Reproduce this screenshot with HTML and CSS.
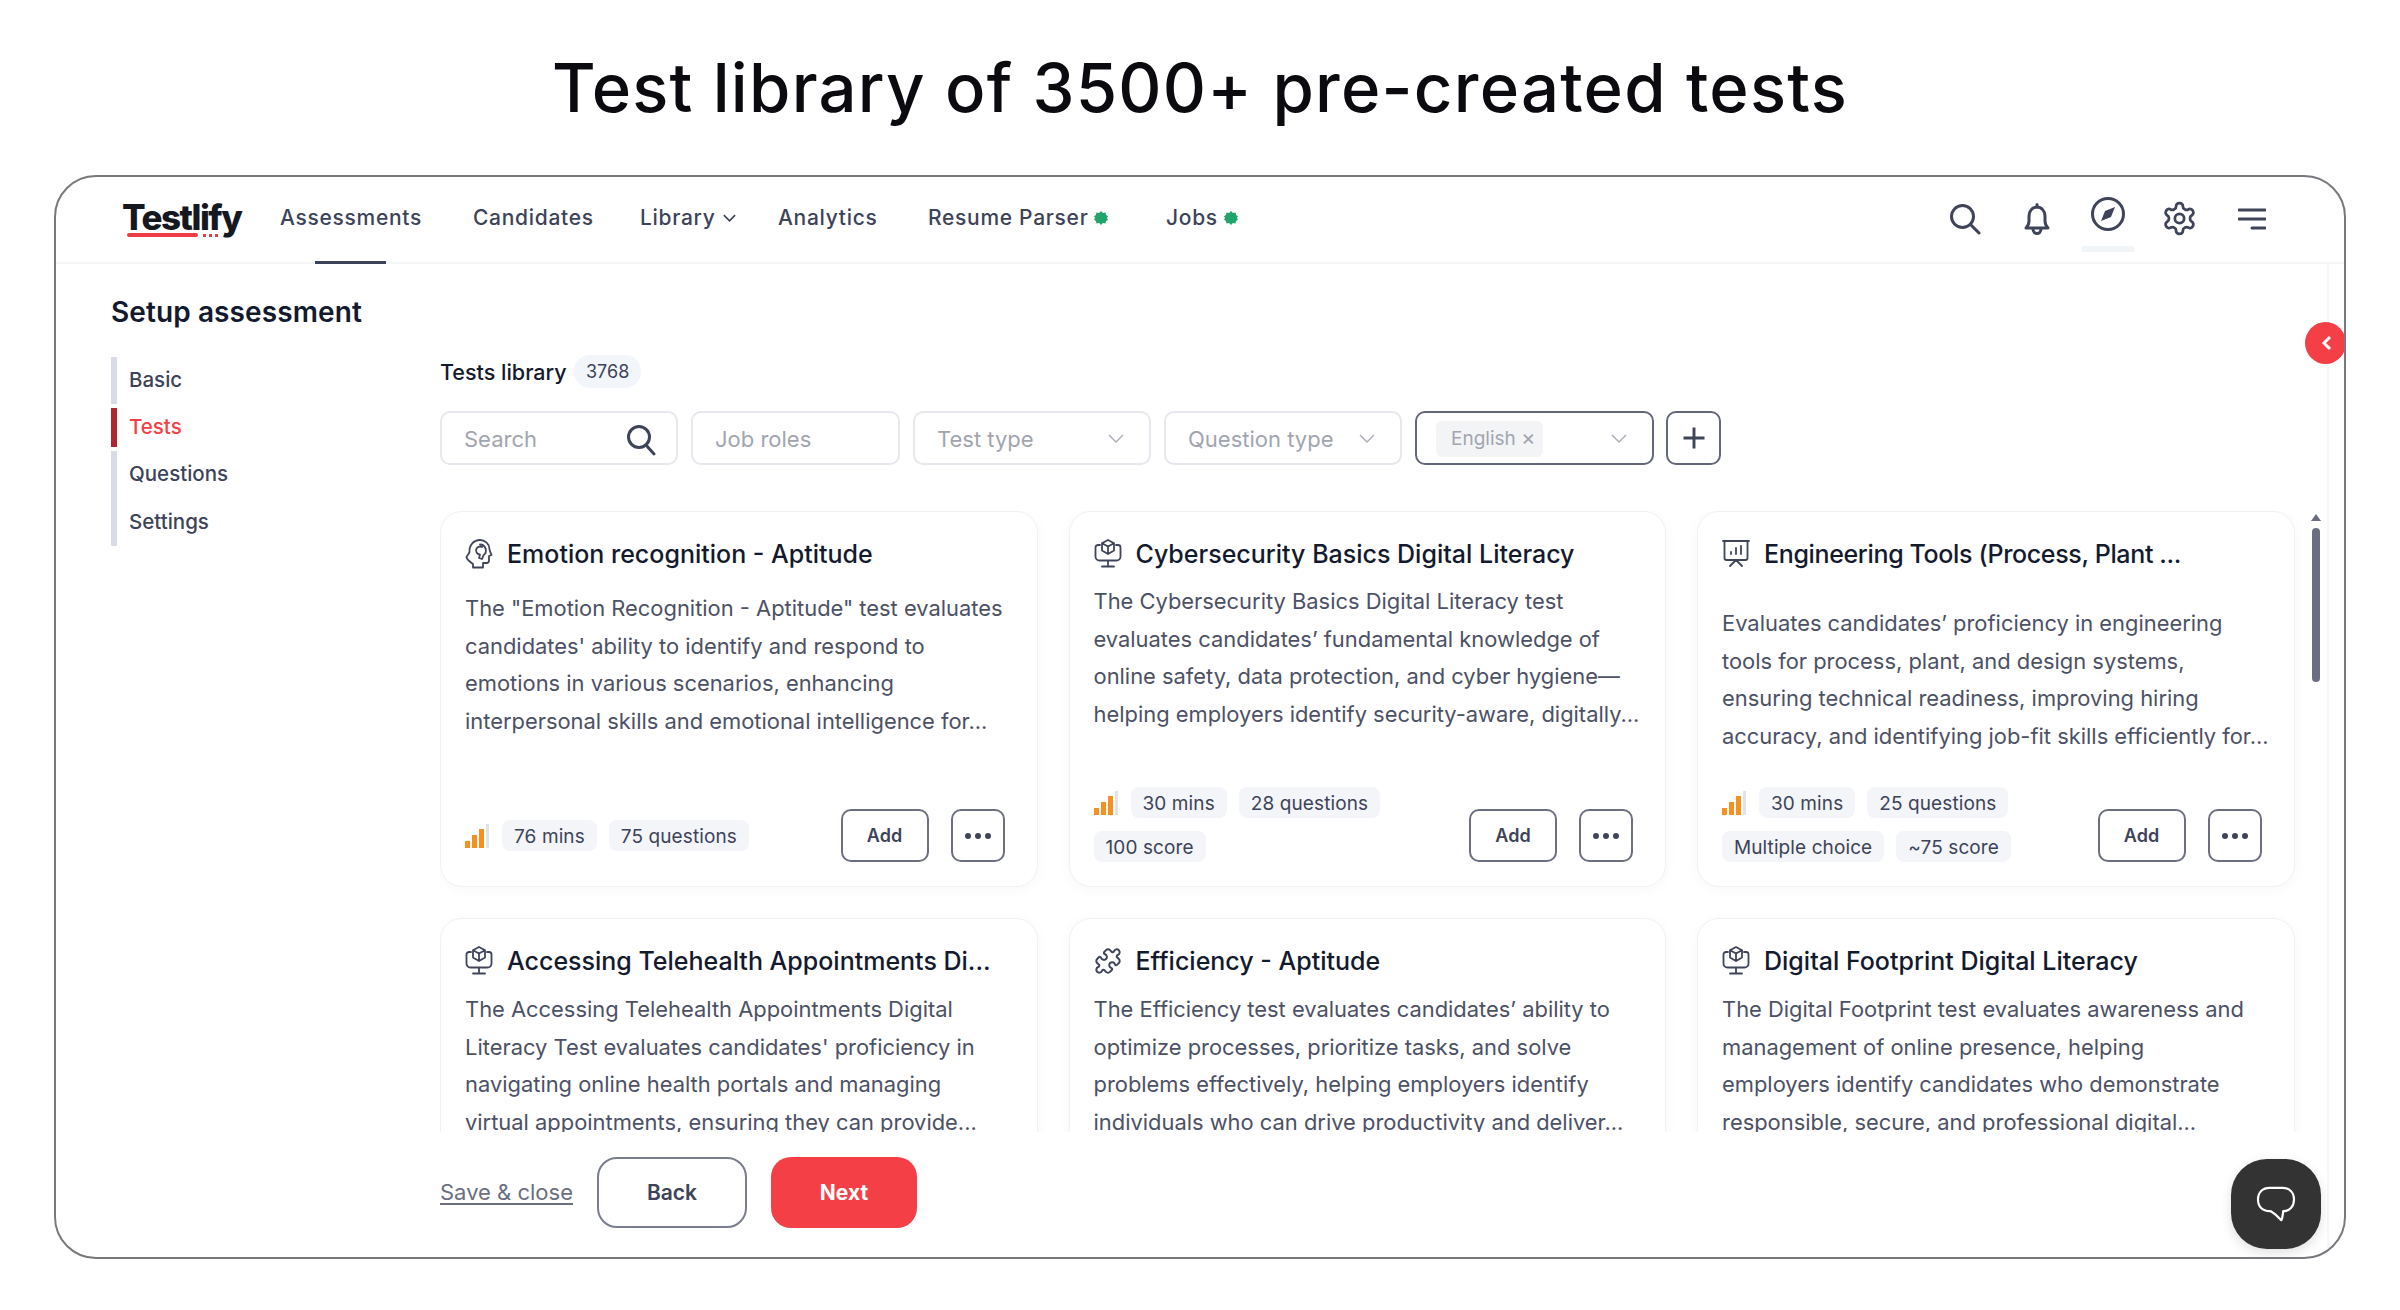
FILE: index.html
```html
<!DOCTYPE html>
<html lang="en">
<head>
<meta charset="utf-8">
<title>Test library</title>
<link rel="stylesheet" href="styles.css">
</head>
<body>
<h1 class="headline">Test library of 3500+ pre-created tests</h1>
<div class="frame">
  <header class="topbar">
    <div class="logo">Testlify<span class="logo-line"></span><span class="logo-dots"></span></div>
    <nav class="nav">
      <a class="nav-item nav-active">Assessments</a>
      <a class="nav-item">Candidates</a>
      <a class="nav-item">Library <svg class="chev" viewBox="0 0 16 10"><path d="M2 2l6 6 6-6"/></svg></a>
      <a class="nav-item">Analytics</a>
      <a class="nav-item">Resume Parser <svg class="dot" viewBox="0 0 14 14"><path d="M7 0l1.900 1.900L11.500 1.500l.6 2.400 1.900 1.300L13 7l1 1.800-1.900 1.300-.6 2.400-2.600-.4L7 14l-1.900-1.900-2.600.4-.6-2.400L0 8.800 1 7 0 5.200l1.900-1.300.6-2.400 2.600.4z"/></svg></a>
      <a class="nav-item">Jobs <svg class="dot" viewBox="0 0 14 14"><path d="M7 0l1.900 1.900L11.500 1.500l.6 2.400 1.900 1.300L13 7l1 1.800-1.900 1.300-.6 2.400-2.600-.4L7 14l-1.900-1.900-2.600.4-.6-2.400L0 8.800 1 7 0 5.200l1.900-1.300.6-2.400 2.600.4z"/></svg></a>
    </nav>
    <div class="tools">
      <svg class="tool tool-search" viewBox="0 0 32 32"><circle cx="13.500" cy="13.500" r="11"/><path d="M21.500 21.500L30 30"/></svg>
      <svg class="tool tool-bell" viewBox="0 0 28 32"><path d="M3 25c2-2 3-4 3-7v-5c0-5 3.500-9 8-9s8 4 8 9v5c0 3 1 5 3 7z"/><path d="M14 1.500V4M10 26c0 6 8 6 8 0"/></svg>
      <div class="tool-compass">
        <svg class="tool" viewBox="0 0 34 34"><circle cx="17" cy="17" r="15.500"/><path class="fill" d="M24 10l-4 10-10 4 4-10z"/></svg>
        <span class="compass-mark"></span>
      </div>
      <svg class="tool tool-gear" viewBox="0 0 24 24"><path d="M12.220 2h-.44a2 2 0 0 0-2 2v.18a2 2 0 0 1-1 1.730l-.43.25a2 2 0 0 1-2 0l-.15-.08a2 2 0 0 0-2.730.73l-.22.38a2 2 0 0 0 .73 2.730l.15.1a2 2 0 0 1 1 1.720v.51a2 2 0 0 1-1 1.740l-.15.09a2 2 0 0 0-.73 2.730l.22.38a2 2 0 0 0 2.730.73l.15-.08a2 2 0 0 1 2 0l.43.25a2 2 0 0 1 1 1.730V20a2 2 0 0 0 2 2h.44a2 2 0 0 0 2-2v-.18a2 2 0 0 1 1-1.730l.43-.25a2 2 0 0 1 2 0l.15.08a2 2 0 0 0 2.730-.73l.22-.39a2 2 0 0 0-.73-2.730l-.15-.08a2 2 0 0 1-1-1.740v-.5a2 2 0 0 1 1-1.740l.15-.09a2 2 0 0 0 .73-2.730l-.22-.38a2 2 0 0 0-2.730-.73l-.15.08a2 2 0 0 1-2 0l-.43-.25a2 2 0 0 1-1-1.730V4a2 2 0 0 0-2-2z"/><circle cx="12" cy="12" r="3"/></svg>
      <svg class="tool tool-menu" viewBox="0 0 28 22"><path d="M1 2h26M1 11h26M14 20h13"/></svg>
    </div>
  </header>

  <div class="body">
    <aside class="side">
      <h2 class="side-title">Setup assessment</h2>
      <ul class="steps">
        <li class="step step-basic">Basic</li>
        <li class="step step-tests">Tests</li>
        <li class="step step-rest">Questions</li>
        <li class="step step-rest">Settings</li>
      </ul>
    </aside>

    <main class="main">
      <div class="lib-head"><span class="lib-title">Tests library</span><span class="lib-count">3768</span></div>
      <div class="filters">
        <div class="field f-search"><span class="ph">Search</span><svg class="f-mag" viewBox="0 0 30 32"><circle cx="13" cy="13" r="10.500"/><path d="M20 21l8 9"/></svg></div>
        <div class="field f-job"><span class="ph">Job roles</span></div>
        <div class="field f-wide"><span class="ph">Test type</span><svg class="f-chev" viewBox="0 0 16 10"><path d="M1 1l7 7 7-7"/></svg></div>
        <div class="field f-wide"><span class="ph">Question type</span><svg class="f-chev" viewBox="0 0 16 10"><path d="M1 1l7 7 7-7"/></svg></div>
        <div class="field f-lang"><span class="chip">English <span class="chip-x">×</span></span><svg class="f-chev" viewBox="0 0 16 10"><path d="M1 1l7 7 7-7"/></svg></div>
        <div class="f-plus"><svg viewBox="0 0 24 24"><path d="M12 3v18M3 12h18"/></svg></div>
      </div>

      <div class="scroller">
        <div class="cards">
          <article class="card">
            <div class="card-head">
              <svg class="card-ico" viewBox="0 0 28 30"><path d="M8 28.500V25c-3-2-6-4-6.500-7 .5-1.500 2.500-3 3-5C4 6 9 1 15 1c5 0 9.500 4 9.500 9 0 2 1 3.500 2 6l-2.500 1v4.500c0 1.500-1 2.500-2.500 2.500H18v4.500z"/><path d="M15 5.500a6 6 0 0 1 3.500 10.800L17 20l-3-1 1-3.500a4 4 0 1 1 2-7.500"/></svg>
              <h3 class="card-title">Emotion recognition - Aptitude</h3>
            </div>
            <p class="desc d-20">The "Emotion Recognition - Aptitude" test evaluates<br>candidates' ability to identify and respond to<br>emotions in various scenarios, enhancing<br>interpersonal skills and emotional intelligence for...</p>
            <div class="card-foot foot-single">
              <div class="meta">
                <svg class="level" viewBox="0 0 24 24"><rect x="0" y="17" width="5" height="7" fill="#f7901e"/><rect x="7" y="11" width="5" height="13" fill="#f7901e"/><rect x="14" y="5" width="5" height="19" fill="#f7901e"/><rect x="21" y="0" width="3" height="24" fill="#dfe3ea"/></svg>
                <span class="tag">76 mins</span><span class="tag">75 questions</span>
              </div>
              <div class="actions"><button class="btn-add">Add</button><button class="btn-more"><i></i><i></i><i></i></button></div>
            </div>
          </article>

          <article class="card">
            <div class="card-head">
              <svg class="card-ico" viewBox="0 0 28 30"><path d="M6 6H4a2.500 2.500 0 0 0-2.500 2.500v9A4 4 0 0 0 5.500 21.500h17a4 4 0 0 0 4-4v-9A2.500 2.500 0 0 0 24 6h-2M14 21.500V27M8 27.500h12"/><path d="M14 1l6 3.200v7.300l-6 3.500-6-3.500V4.200zM8 4.200l6 3.300 6-3.300M14 7.500V15"/></svg>
              <h3 class="card-title">Cybersecurity Basics Digital Literacy</h3>
            </div>
            <p class="desc d-13">The Cybersecurity Basics Digital Literacy test<br>evaluates candidates’ fundamental knowledge of<br>online safety, data protection, and cyber hygiene—<br>helping employers identify security-aware, digitally...</p>
            <div class="card-foot">
              <div class="meta">
                <svg class="level" viewBox="0 0 24 24"><rect x="0" y="17" width="5" height="7" fill="#f7901e"/><rect x="7" y="11" width="5" height="13" fill="#f7901e"/><rect x="14" y="5" width="5" height="19" fill="#f7901e"/><rect x="21" y="0" width="3" height="24" fill="#dfe3ea"/></svg>
                <span class="tag">30 mins</span><span class="tag">28 questions</span><span class="tag">100 score</span>
              </div>
              <div class="actions"><button class="btn-add">Add</button><button class="btn-more"><i></i><i></i><i></i></button></div>
            </div>
          </article>

          <article class="card">
            <div class="card-head">
              <svg class="card-ico" viewBox="0 0 28 30"><path d="M1 2h26M2.500 2v17a2 2 0 0 0 2 2h19a2 2 0 0 0 2-2V2M14 21l-6 6M14 21l6 6M9 15v-2M14 15V9M19 15V7"/></svg>
              <h3 class="card-title title-tight">Engineering Tools (Process, Plant ...</h3>
            </div>
            <p class="desc d-35">Evaluates candidates’ proficiency in engineering<br>tools for process, plant, and design systems,<br>ensuring technical readiness, improving hiring<br>accuracy, and identifying job-fit skills efficiently for...</p>
            <div class="card-foot">
              <div class="meta">
                <svg class="level" viewBox="0 0 24 24"><rect x="0" y="17" width="5" height="7" fill="#f7901e"/><rect x="7" y="11" width="5" height="13" fill="#f7901e"/><rect x="14" y="5" width="5" height="19" fill="#f7901e"/><rect x="21" y="0" width="3" height="24" fill="#dfe3ea"/></svg>
                <span class="tag">30 mins</span><span class="tag">25 questions</span><span class="tag">Multiple choice</span><span class="tag">~75 score</span>
              </div>
              <div class="actions"><button class="btn-add">Add</button><button class="btn-more"><i></i><i></i><i></i></button></div>
            </div>
          </article>

          <article class="card">
            <div class="card-head">
              <svg class="card-ico" viewBox="0 0 28 30"><path d="M6 6H4a2.500 2.500 0 0 0-2.500 2.500v9A4 4 0 0 0 5.500 21.500h17a4 4 0 0 0 4-4v-9A2.500 2.500 0 0 0 24 6h-2M14 21.500V27M8 27.500h12"/><path d="M14 1l6 3.200v7.300l-6 3.500-6-3.500V4.200zM8 4.200l6 3.300 6-3.300M14 7.500V15"/></svg>
              <h3 class="card-title">Accessing Telehealth Appointments Di...</h3>
            </div>
            <p class="desc d-14">The Accessing Telehealth Appointments Digital<br>Literacy Test evaluates candidates' proficiency in<br>navigating online health portals and managing<br>virtual appointments, ensuring they can provide...</p>
          </article>

          <article class="card">
            <div class="card-head">
              <svg class="card-ico ico-puzzle" viewBox="0 0 24 24"><path d="M19.439 7.850c-.049.322.059.648.289.878l1.568 1.568c.47.47.706 1.087.706 1.704s-.235 1.233-.706 1.704l-1.611 1.611a.98.98 0 0 1-.837.276c-.47-.07-.802-.48-.968-.925a2.501 2.501 0 1 0-3.214 3.214c.446.166.855.497.925.968a.979.979 0 0 1-.276.837l-1.610 1.610a2.404 2.404 0 0 1-1.705.707 2.402 2.402 0 0 1-1.704-.706l-1.568-1.568a1.026 1.026 0 0 0-.877-.29c-.493.074-.84.504-1.020.968a2.500 2.500 0 1 1-3.237-3.237c.464-.18.894-.527.967-1.020a1.026 1.026 0 0 0-.289-.877l-1.568-1.568A2.402 2.402 0 0 1 1.998 12c0-.617.236-1.234.706-1.704L4.230 8.770c.24-.24.581-.353.917-.303.515.077.877.528 1.073 1.010a2.500 2.500 0 1 0 3.259-3.259c-.482-.196-.933-.558-1.010-1.073-.05-.336.062-.676.303-.917l1.525-1.525A2.402 2.402 0 0 1 12 1.998c.617 0 1.234.236 1.704.706l1.568 1.568c.23.23.556.338.877.29.493-.074.84-.504 1.020-.968a2.500 2.500 0 1 1 3.237 3.237c-.464.18-.894.527-.967 1.020z"/></svg>
              <h3 class="card-title">Efficiency - Aptitude</h3>
            </div>
            <p class="desc d-14">The Efficiency test evaluates candidates’ ability to<br>optimize processes, prioritize tasks, and solve<br>problems effectively, helping employers identify<br>individuals who can drive productivity and deliver...</p>
          </article>

          <article class="card">
            <div class="card-head">
              <svg class="card-ico" viewBox="0 0 28 30"><path d="M6 6H4a2.500 2.500 0 0 0-2.500 2.500v9A4 4 0 0 0 5.500 21.500h17a4 4 0 0 0 4-4v-9A2.500 2.500 0 0 0 24 6h-2M14 21.500V27M8 27.500h12"/><path d="M14 1l6 3.200v7.300l-6 3.500-6-3.500V4.200zM8 4.200l6 3.300 6-3.300M14 7.500V15"/></svg>
              <h3 class="card-title">Digital Footprint Digital Literacy</h3>
            </div>
            <p class="desc d-14">The Digital Footprint test evaluates awareness and<br>management of online presence, helping<br>employers identify candidates who demonstrate<br>responsible, secure, and professional digital...</p>
          </article>
        </div>
        <div class="scrollbar"><span class="sb-arrow"></span><span class="sb-thumb"></span></div>
      </div>

      <div class="footer-bar">
        <a class="save">Save &amp; close</a>
        <button class="btn-back">Back</button>
        <button class="btn-next">Next</button>
      </div>
    </main>
  </div>

  <div class="side-tab"><svg viewBox="0 0 12 16"><path d="M9 2L3 8l6 6"/></svg></div>
  <div class="help"><svg viewBox="0 0 44 40"><path d="M15 2h14c8 0 13 5 13 13s-5 13-12 13c-.5 4-.5 7-2 10-2-1-4-5-9-8-1-.5-2-2-4-2C7 28 2 23 2 15S7 2 15 2z"/></svg></div>
</div>
</body>
</html>
```

FILE: styles.css
```css
* { box-sizing: border-box; }
html, body { margin: 0; padding: 0; background: #fff; }
body { font-family: Inter, "Noto Sans", sans-serif; color: #141a2e; width: 2400px; height: 1310px; overflow: hidden; }
p, h1, h2, h3, ul { margin: 0; padding: 0; }
button { font-family: inherit; cursor: pointer; }

.headline { height: 175px; padding-top: 44px; text-align: center; font-size: 67px; line-height: 88px; font-weight: 500; color: #0b0b0f; letter-spacing: 1.250px; }

.frame { position: relative; margin-left: 54px; width: 2292px; height: 1084px; border: 2px solid #77787c; border-radius: 42px; overflow: hidden; display: flex; flex-direction: column; background: #fff; }

.topbar { height: 87px; flex: none; display: flex; align-items: center; border-bottom: 2px solid #f5f6f8; padding-left: 66px; position: relative; }
.logo { position: relative; width: 158px; flex: none; margin-bottom: 6px; font-size: 35px; font-weight: 800; letter-spacing: -1.500px; color: #16181f; line-height: 44px; }
.logo-line { position: absolute; left: 5px; top: 38px; width: 71px; height: 4px; background: #ef3b45; border-radius: 2px; }
.logo-dots { position: absolute; left: 81px; top: 39px; width: 18px; height: 3px; background: repeating-linear-gradient(90deg, #ef3b45 0 3px, transparent 3px 6px); }

.nav { display: grid; grid-template-columns: 193px 167px 138px 150px 238px auto; align-items: center; height: 100%; font-size: 21px; font-weight: 500; letter-spacing: .7px; color: #3d4358; }
.nav-item { position: relative; display: flex; align-items: center; gap: 6px; height: 100%; padding-bottom: 4px; white-space: nowrap; }
.nav-active::after { content: ""; position: absolute; left: 35px; bottom: -2px; width: 71px; height: 3px; background: #3d4358; }
.chev { width: 15px; height: 10px; fill: none; stroke: #3d4358; stroke-width: 1.800; }
.dot { width: 14px; height: 14px; fill: #21a56d; }

.tools { position: absolute; left: 1893px; top: 0; right: 0; height: 85px; }
.tool { fill: none; stroke: #3f4459; stroke-width: 3; stroke-linecap: round; stroke-linejoin: round; display: block; }
.tools > .tool, .tool-compass { position: absolute; }
.tool-search { left: 0; top: 26px; width: 32px; height: 32px; }
.tool-bell { left: 74px; top: 26px; width: 28px; height: 32px; }
.tool-compass { left: 132px; top: 20px; width: 54px; height: 55px; }
.tool-compass .tool { width: 34px; height: 34px; margin: 0 auto; }
.tool-compass .fill { fill: #3f4459; stroke: none; }
.compass-mark { position: absolute; left: 0; bottom: 0; width: 54px; height: 6px; border-radius: 3px; background: #f2f5f8; }
.tool-gear { left: 212px; top: 23px; width: 37px; height: 37px; stroke-width: 1.800; }
.tool-menu { left: 289px; top: 31px; width: 28px; height: 22px; }

.body { flex: 1; display: flex; min-height: 0; }
.side { width: 384px; flex: none; padding: 29px 0 0 55px; }
.side-title { font-size: 28px; line-height: 38px; font-weight: 600; color: #141a2e; letter-spacing: .1px; }
.steps { list-style: none; margin-top: 26px; font-size: 20.500px; font-weight: 500; color: #3d4358; }
.step { height: 47px; display: flex; align-items: center; padding: 0 0 2px 12px; border-left: 6px solid #d8dce5; }
.step-basic { height: 47px; margin-bottom: 4px; padding-top: 1px; padding-bottom: 3px; }
.step-tests { height: 39px; border-left-color: #b0262e; color: #f43f46; margin-bottom: 4px; }
.step-rest { height: 47.500px; }

.main { width: 1889px; flex: none; display: flex; flex-direction: column; padding-top: 91px; border-right: 2px solid #f5f7fa; min-height: 0; }
.lib-head { display: flex; align-items: center; height: 33px; gap: 5px; }
.lib-title { font-size: 21.500px; font-weight: 500; color: #141a2e; width: 129px; white-space: nowrap; }
.lib-count { height: 33px; padding: 0 12px; border-radius: 16px; background: #f2f5f9; font-size: 18px; line-height: 33px; color: #3d4358; }
.filters { display: flex; gap: 13px; height: 54px; margin-top: 23px; }
.field { position: relative; height: 54px; border: 2px solid #e6e8ee; border-radius: 10px; display: flex; align-items: center; padding: 2px 22px 0; font-size: 22px; color: #a2a5b0; }
.f-search { width: 238px; }
.f-job { width: 209px; }
.f-wide { width: 238px; }
.f-lang { width: 239px; border-color: #63677a; padding-left: 19px; }
.f-mag { position: absolute; right: 20px; top: 11px; width: 30px; height: 32px; fill: none; stroke: #3f4459; stroke-width: 3; stroke-linecap: round; }
.f-chev { position: absolute; right: 25px; top: 21px; width: 16px; height: 10px; fill: none; stroke: #a9acb6; stroke-width: 1.400; }
.chip { height: 36px; padding: 0 7px 0 15px; background: #f3f4f6; border-radius: 6px; font-size: 19px; line-height: 36px; color: #a2a5b0; }
.chip-x { font-size: 22px; line-height: 20px; }
.f-plus { width: 55px; height: 54px; margin-left: -1px; border: 2px solid #63677a; border-radius: 10px; display: flex; align-items: center; justify-content: center; }
.f-plus svg { width: 28px; height: 28px; fill: none; stroke: #3f4459; stroke-width: 2.500; }

.scroller { display: flex; height: 621px; flex: none; margin-top: 46px; overflow: hidden; gap: 16px; }
.cards { width: 1856px; flex: none; display: grid; grid-template-columns: repeat(3, 597.500px); grid-auto-rows: 376px; column-gap: 31px; row-gap: 31px; }
.card { border: 1px solid #eff1f5; border-radius: 22px; background: #fff; padding: 26px 24px 24px; display: flex; flex-direction: column; box-shadow: 0 2px 14px rgba(40, 50, 90, .035); }
.card-head { display: flex; align-items: center; height: 32px; gap: 14px; }
.card-ico { width: 28px; height: 30px; flex: none; fill: none; stroke: #3f4459; stroke-width: 1.800; stroke-linecap: round; stroke-linejoin: round; }
.ico-puzzle { stroke-width: 1.700; }
.card-title { font-size: 25px; font-weight: 500; line-height: 32px; color: #141a2e; white-space: nowrap; }
.title-tight { letter-spacing: -.35px; }
.desc { font-size: 21.900px; line-height: 37.500px; color: #4c5165; white-space: nowrap; }
.d-13 { margin-top: 13px; }
.d-14 { margin-top: 14px; }
.d-20 { margin-top: 20px; }
.d-35 { margin-top: 35px; }
.card-foot { margin-top: auto; display: flex; justify-content: space-between; align-items: flex-end; }
.foot-single { align-items: center; }
.meta { width: 350px; display: flex; flex-wrap: wrap; align-items: center; gap: 13px 12px; }
.level { width: 24px; height: 24px; flex: none; margin-right: 1px; }
.tag { height: 31px; padding: 0 12px; border-radius: 8px; background: #f3f5f9; font-size: 19px; line-height: 34px; letter-spacing: .1px; color: #3d4358; white-space: nowrap; }
.actions { display: flex; gap: 22px; margin-right: 8px; }
.btn-add { width: 88px; height: 53px; border: 2px solid #6b6f80; border-radius: 10px; background: #fff; font-size: 18px; font-weight: 600; color: #3d4358; }
.btn-more { width: 54px; height: 53px; border: 2px solid #6b6f80; border-radius: 10px; background: #fff; display: flex; align-items: center; justify-content: center; gap: 4px; padding: 0; }
.btn-more i { width: 6px; height: 6px; border-radius: 50%; background: #3f4459; }

.scrollbar { width: 8px; flex: none; display: flex; flex-direction: column; align-items: center; }
.sb-arrow { width: 0; height: 0; margin-top: 3px; border-left: 5px solid transparent; border-right: 5px solid transparent; border-bottom: 7px solid #6b6d80; }
.sb-thumb { width: 8px; height: 154px; margin-top: 7px; border-radius: 4px; background: #6b6d80; }

.footer-bar { flex: 1; display: flex; align-items: center; padding-bottom: 4px; }
.save { width: 157px; margin-bottom: 2px; font-size: 22px; color: #6b6f80; white-space: nowrap; text-decoration: underline; text-underline-offset: 3px; }
.btn-back { width: 150px; height: 71px; border: 2px solid #7a7d8e; border-radius: 20px; background: #fff; font-size: 21px; font-weight: 600; color: #3d4358; }
.btn-next { width: 146px; height: 71px; margin-left: 24px; border: 0; border-radius: 20px; background: #f43f46; font-size: 21px; font-weight: 700; color: #fff; }

.side-tab { position: absolute; right: -2px; top: 145px; width: 41px; height: 42px; border-radius: 50%; background: #f43f46; display: flex; align-items: center; justify-content: center; }
.side-tab svg { width: 12px; height: 16px; fill: none; stroke: #fff; stroke-width: 3; margin-left: 2px; }
.help { position: absolute; left: 2175px; top: 982px; width: 90px; height: 90px; border-radius: 36px; background: #333; display: flex; align-items: center; justify-content: center; box-shadow: 0 4px 12px rgba(0, 0, 0, .12); }
.help svg { width: 40px; height: 36px; fill: none; stroke: #fff; stroke-width: 2.400; stroke-linejoin: round; }
```
